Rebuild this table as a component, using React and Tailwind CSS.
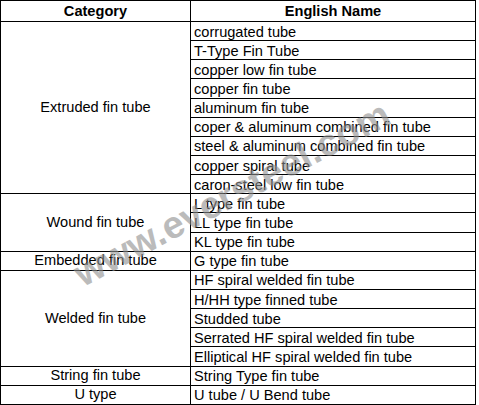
const groups = [
  {
    category: "Extruded fin tube",
    names: [
      "corrugated tube",
      "T-Type Fin Tube",
      "copper low fin tube",
      "copper fin tube",
      "aluminum fin tube",
      "coper & aluminum combined fin tube",
      "steel & aluminum combined fin tube",
      "copper spiral tube",
      "caron-steel low fin tube",
    ],
  },
  { category: "Wound fin tube", names: ["L type fin tube", "LL type fin tube", "KL type fin tube"] },
  { category: "Embedded fin tube", names: ["G type fin tube"] },
  {
    category: "Welded fin tube",
    names: [
      "HF spiral welded fin tube",
      "H/HH type finned tube",
      "Studded tube",
      "Serrated HF spiral welded fin tube",
      "Elliptical HF spiral welded fin tube",
    ],
  },
  { category: "String fin tube", names: ["String Type fin tube"] },
  { category: "U type", names: ["U tube / U Bend tube"] },
];

export default function App() {
  return (
    <div
      className="relative w-[479px] h-[405px] bg-white overflow-hidden text-black"
      style={{ fontFamily: '"Liberation Sans", Arial, sans-serif' }}
    >
      <table className="border-collapse text-[14.6px] leading-[15px] w-[476px] table-fixed">
        <colgroup>
          <col className="w-[190px]" />
          <col />
        </colgroup>
        <thead>
          <tr className="h-[21px]">
            <th className="border border-black font-bold text-center align-middle p-0 pt-px">Category</th>
            <th className="border border-black font-bold text-center align-middle p-0 pt-px">English Name</th>
          </tr>
        </thead>
        <tbody>
          {groups.map((g) =>
            g.names.map((name, i) => (
              <tr key={g.category + name} className="h-[19.15px]">
                {i === 0 && (
                  <td rowSpan={g.names.length} className="border border-black text-center align-middle p-0">
                    {g.category}
                  </td>
                )}
                <td className="border border-black px-[3px] pt-[2px] pb-0 whitespace-nowrap align-middle">{name}</td>
              </tr>
            ))
          )}
        </tbody>
      </table>

      {/* watermark */}
      <div className="pointer-events-none absolute left-[232px] top-[194px] -translate-x-1/2 -translate-y-1/2 -rotate-[28deg] whitespace-nowrap text-[38px] font-bold text-[#8f8f8f] opacity-60">
        www.eversteel.com
      </div>
    </div>
  );
}
